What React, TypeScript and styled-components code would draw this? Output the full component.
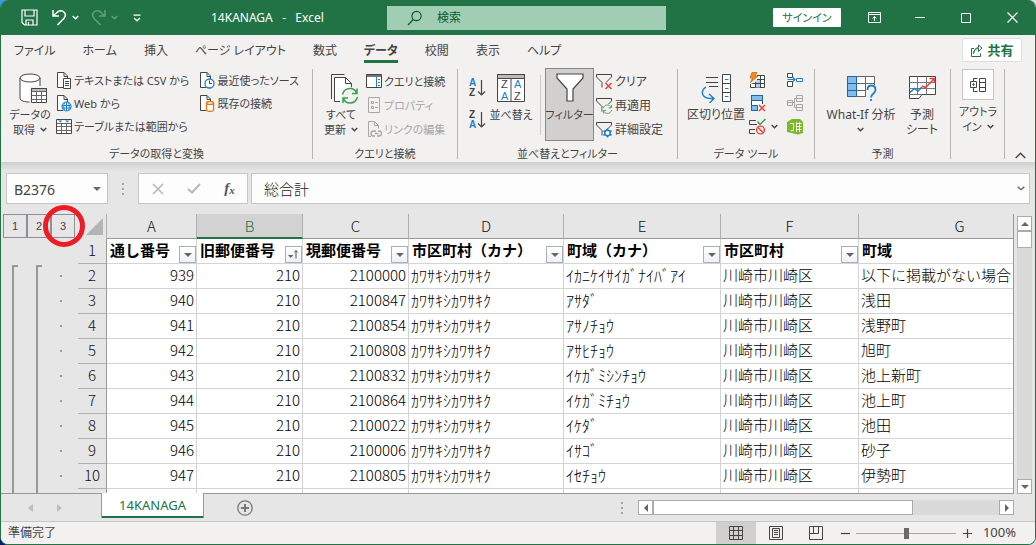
import React from "react";
import styled, { createGlobalStyle, css } from "styled-components";

const GREEN = "#217346";
const INK = "#444444";
const BLUE = "#1e7fc8";
const RED = "#e8423f";

const Global = createGlobalStyle`
  * { box-sizing: border-box; }
  html, body { margin: 0; height: 100%; }
  body {
    background: linear-gradient(90deg, #3c9be8 0, #3c9be8 50%, #dcdcdc 50%) top / 100% 50% no-repeat,
      linear-gradient(90deg, #0b1a6e 50%, #dcdcdc 50%);
    font-family: "Noto Sans", "Noto Sans CJK JP", sans-serif;
    font-size: 12px;
    line-height: 15px;
    color: ${INK};
    overflow: hidden;
  }
  button, input {
    font: inherit;
    color: inherit;
    margin: 0;
    padding: 0;
    border: 0;
    background: none;
    outline: none;
  }
  button { white-space: nowrap; font-feature-settings: "palt"; }
  svg { display: block; flex: none; }
`;

const Window = styled.div`
  height: 100vh;
  display: flex;
  flex-direction: column;
  background: #e6e6e6;
  border: 1px solid ${GREEN};
  border-top: 0;
  border-radius: 8px;
  overflow: hidden;
`;

/* ---------- title bar ---------- */

const TitleBar = styled.header`
  height: 35px;
  flex: none;
  display: flex;
  align-items: center;
  background: ${GREEN};
  color: #fff;
`;

const QuickAccess = styled.div`
  flex: 0 0 386px;
  display: flex;
  align-items: center;
  padding-left: 20px;
`;

const QuickButton = styled.button<{ $gap?: number; $dim?: boolean }>`
  display: flex;
  align-items: center;
  gap: 5px;
  margin-right: ${(p) => p.$gap ?? 12}px;
  opacity: ${(p) => (p.$dim ? 0.3 : 1)};
`;

const DocTitle = styled.h1`
  margin: 0;
  font-size: 12px;
  font-weight: 400;
  white-space: pre;
`;

const SearchBox = styled.label`
  flex: 0 1 279px;
  height: 24px;
  display: flex;
  align-items: center;
  gap: 14px;
  padding-left: 20px;
  background: #a0cdb4;
  color: #0e5c2f;
  input { width: 100%; }
  input::placeholder { color: #0e5c2f; opacity: 1; }
`;

const WindowControls = styled.div`
  flex: 1;
  display: flex;
  align-items: center;
  justify-content: flex-end;
`;

const SignIn = styled.button`
  width: 68px;
  height: 19px;
  margin-right: 10px;
  background: #fff;
  color: ${GREEN};
  border-radius: 1px;
  font-size: 11px;
`;

const CaptionButton = styled.button`
  width: 46px;
  height: 35px;
  display: grid;
  place-items: center;
`;

/* ---------- tabs ---------- */

const TabBar = styled.nav`
  height: 31px;
  flex: none;
  display: flex;
  align-items: flex-start;
  gap: 27px;
  padding: 3px 13px 0 13px;
  background: #f3f1f0;
`;

const Tab = styled.button<{ $active?: boolean }>`
  height: 25px;
  padding-top: 3px;
  font-size: 12px;
  line-height: 19px;
  border-bottom: 3px solid ${(p) => (p.$active ? GREEN : "transparent")};
  font-weight: ${(p) => (p.$active ? 700 : 400)};
`;

const ShareButton = styled.button`
  width: 60px;
  height: 24px;
  margin-left: auto;
  display: flex;
  align-items: center;
  justify-content: center;
  gap: 4px;
  background: #fff;
  border: 1px solid #e1dfdd;
  border-radius: 2px;
  color: ${GREEN};
  font-size: 13px;
  font-weight: 700;
`;

/* ---------- ribbon ---------- */

const Ribbon = styled.div`
  height: 96px;
  flex: none;
  display: flex;
  background: #f3f1f0;
`;

const Group = styled.section<{ $width: number }>`
  width: ${(p) => p.$width}px;
  margin: 3px 0;
  display: flex;
  flex-direction: column;
  border-right: 1px solid #b8b6b4;
`;

const GroupBody = styled.div<{ $pad?: number }>`
  flex: 1;
  display: flex;
  align-items: flex-start;
  padding-left: ${(p) => p.$pad ?? 0}px;
`;

const GroupLabel = styled.h2`
  margin: 0;
  height: 15px;
  font-size: 11px;
  font-weight: 400;
  line-height: 15px;
  text-align: center;
  white-space: nowrap;
  font-feature-settings: "palt";
  margin-bottom: -2px;
`;

const BigButton = styled.button<{ $width: number; $pressed?: boolean; $kana?: boolean }>`
  width: ${(p) => p.$width}px;
  height: 73px;
  margin-top: -1px;
  padding-top: 4px;
  display: flex;
  flex-direction: column;
  align-items: center;
  gap: 3px;
  font-size: ${(p) => (p.$kana ? 11 : 12)}px;
  ${(p) =>
    p.$pressed &&
    css`
      background: #d2d0ce;
      box-shadow: inset 0 0 0 1px #8a8886;
    `}
`;

const BigIcon = styled.span`
  height: 32px;
  display: grid;
  place-items: center;
`;

const BigText = styled.span`
  display: flex;
  align-items: center;
  justify-content: center;
  gap: 5px;
`;

const Stack = styled.div<{ $gap?: number; $left?: number; $top?: number; $kanji?: boolean }>`
  display: flex;
  flex-direction: column;
  align-items: flex-start;
  gap: ${(p) => p.$gap ?? 6}px;
  margin-left: ${(p) => p.$left ?? 0}px;
  padding-top: ${(p) => p.$top ?? 3}px;
  font-size: ${(p) => (p.$kanji ? 12 : 11)}px;
`;

const SmallButton = styled.button`
  height: 17px;
  display: flex;
  align-items: center;
  gap: 2px;
  &:disabled { color: #a8a6a4; }
`;

const InnerRule = styled.span`
  width: 1px;
  height: 60px;
  margin: 6px 4px 0 5px;
  background: #cccac8;
`;

const IconFrame = styled.span`
  width: 32px;
  height: 31px;
  display: grid;
  place-items: center;
  background: #fff;
  border: 1px solid #c8c6c4;
`;

const Collapse = styled.button`
  margin: auto 9px 3px auto;
`;

const Pad = styled.span`
  width: 1px;
`;

const ChevronLine = styled.span`
  height: 15px;
  display: grid;
  place-items: center;
`;

const OutlineButton = styled.button`
  width: 46px;
  display: flex;
  flex-direction: column;
  align-items: center;
  gap: 4px;
  font-size: 11px;
`;

/* ---------- formula bar ---------- */

const FormulaBar = styled.div`
  flex: none;
  display: flex;
  align-items: center;
  padding: 11px 5px 10px;
  background: linear-gradient(#cfcfcf, #e6e6e6 9px);
`;

const Field = styled.div<{ $grow?: boolean; $width?: number }>`
  height: 31px;
  min-width: 0;
  ${(p) => (p.$grow ? "flex: 1;" : `flex: 0 0 ${p.$width}px;`)}
  display: flex;
  align-items: center;
  background: #fdfdfd;
  border: 1px solid #c6c6c6;
  input { flex: 1; width: 0; min-width: 0; }
`;

const NameInput = styled.input`
  padding: 3px 0 0 7px;
  font-size: 14px;
  line-height: 20px;
`;

const FormulaInput = styled.input`
  padding-left: 12px;
  font-size: 15px;
  font-family: "Noto Sans CJK JP", sans-serif;
  font-weight: 300;
  line-height: 22px;
  color: #222;
`;

const FieldButton = styled.button<{ $width?: number }>`
  width: ${(p) => p.$width ?? 20}px;
  height: 100%;
  flex: none;
  display: grid;
  place-items: center;
`;

const FxButton = styled.button`
  width: 35px;
  font: italic 700 15px "Liberation Serif", serif;
  color: #555;
  sub { font-size: 11px; vertical-align: -1px; }
`;

const Grip = styled.span<{ $side: number }>`
  margin: 0 ${(p) => p.$side}px;
  display: grid;
  gap: 3px;
  i { width: 2px; height: 2px; background: #a6a6a6; }
`;

const FieldGap = styled.span`
  width: 3px;
`;

/* ---------- sheet ---------- */

const SheetArea = styled.main`
  flex: 1;
  min-height: 0;
  display: flex;
`;

const Outline = styled.div`
  flex: 0 0 77px;
  display: flex;
  flex-direction: column;
`;

const Levels = styled.div`
  height: 51px;
  flex: none;
  display: flex;
  padding-left: 2px;
`;

const LevelButton = styled.button`
  position: relative;
  width: 24px;
  height: 24px;
  border: 1px solid #8c8f96;
  font-family: "Liberation Sans", sans-serif;
  font-size: 11px;
  text-align: center;
`;

const RedRing = styled.span`
  position: absolute;
  z-index: 2;
  left: -9px;
  top: -10px;
  width: 42px;
  height: 42px;
  border: 5px solid #ee1c25;
  border-radius: 50%;
`;

const Brackets = styled.div`
  flex: 1;
  min-height: 0;
  overflow: hidden;
  display: flex;
  padding-left: 11px;
`;

const Bracket = styled.span`
  width: 6px;
  margin-right: 18px;
  border: solid #999;
  border-width: 2px 0 0 2px;
`;

const Dots = styled.div`
  display: flex;
  flex-direction: column;
  gap: 23px;
  padding-top: 10px;
  i { flex: none; width: 2px; height: 2px; background: #999; }
`;

const GridClip = styled.div`
  flex: 1;
  min-width: 0;
  overflow: hidden;
  border-right: 1px solid #999;
`;

/* The last column runs on past the visible edge of the sheet. */
const Grid = styled.table`
  width: calc(100% + 48px);
  table-layout: fixed;
  border-collapse: separate;
  border-spacing: 0;
  font-family: "Noto Sans CJK JP", sans-serif;
  color: #000;
`;

const cell = css`
  height: 25px;
  padding: 0;
  overflow: hidden;
  white-space: nowrap;
  line-height: 22px;
`;

const Corner = styled.td`
  ${cell}
  padding-left: 8px;
  border-right: 1px solid #b0b0b0;
`;

const ColHead = styled.th<{ $selected?: boolean }>`
  ${cell}
  font-size: 15px;
  font-weight: 300;
  color: ${(p) => (p.$selected ? GREEN : "#111")};
  background: ${(p) => (p.$selected ? "#d2d2d2" : "#e6e6e6")};
  border-right: 1px solid #b0b0b0;
  border-bottom: ${(p) => (p.$selected ? `2px solid ${GREEN}` : "1px solid #999")};
`;

const RowHead = styled.th`
  ${cell}
  padding-bottom: 2px;
  font-size: 15px;
  font-weight: 300;
  color: #111;
  background: #e6e6e6;
  border-right: 1px solid #999;
  border-bottom: 1px solid #b0b0b0;
`;

const Cell = styled.td<{ $kind?: "num" | "half" }>`
  ${cell}
  background: #fff;
  border-right: 1px solid #d4d4d4;
  border-bottom: 1px solid #d4d4d4;
  font-size: ${(p) => (p.$kind === "half" ? 16 : 15)}px;
  font-weight: 300;
  text-align: ${(p) => (p.$kind === "num" ? "right" : "left")};
  padding: 0 2px 2px;
`;

const HeadCell = styled(Cell)`
  padding: 0 0 0 3px;
  font-weight: 700;
`;

const Heading = styled.div`
  height: 24px;
  display: flex;
  align-items: flex-start;
  justify-content: space-between;
  font-size: 15px;
  font-weight: 700;
  line-height: 22px;
`;

const FilterButton = styled.button`
  width: 17px;
  height: 17px;
  flex: none;
  align-self: flex-end;
  display: grid;
  place-items: center;
  background: linear-gradient(#fff, #eef1f6);
  border: 1px solid #a9afb8;
`;

const VScroll = styled.div`
  flex: 0 0 21px;
  display: flex;
  flex-direction: column;
  align-items: center;
  padding-top: 2px;
  margin-bottom: -1px;
  z-index: 1;
`;

const ScrollButton = styled.button`
  width: 15px;
  height: 15px;
  flex: none;
  display: grid;
  place-items: center;
  background: #fff;
  border: 1px solid #ababab;
`;

const Track = styled.div<{ $row?: boolean }>`
  flex: 1;
  display: flex;
  flex-direction: ${(p) => (p.$row ? "row" : "column")};
  ${(p) => (p.$row ? "height" : "width")}: 15px;
  background: #dadada;
`;

const Thumb = styled.span<{ $row?: boolean }>`
  ${(p) => (p.$row ? "width: 75%; height: 15px;" : "width: 15px; height: 17px;")}
  background: #fff;
  border: 1px solid #ababab;
`;

/* ---------- sheet tabs ---------- */

const SheetBar = styled.div`
  height: 28px;
  flex: none;
  display: flex;
  align-items: flex-start;
`;

const SheetNav = styled.div`
  width: 100px;
  height: 28px;
  display: flex;
  align-items: center;
  gap: 24px;
  padding-left: 27px;
  border-top: 1px solid #999;
`;

const SheetTab = styled.button`
  width: 103px;
  height: 25px;
  background: #fff;
  color: ${GREEN};
  border: solid #999;
  border-width: 0 1px;
  box-shadow: inset 0 -2px 0 ${GREEN};
  font-size: 13px;
`;

const SheetRest = styled.div`
  flex: 1;
  height: 28px;
  display: flex;
  align-items: center;
  border-top: 1px solid #999;
  padding-left: 33px;
`;

const Fill = styled.span`
  flex: 1;
`;

const HScroll = styled.div`
  flex: 0 0 376px;
  display: flex;
  align-items: center;
`;

const BarEnd = styled.span`
  width: 21px;
`;

/* ---------- status bar ---------- */

const StatusBar = styled.footer`
  height: 23px;
  flex: none;
  display: flex;
  align-items: stretch;
  padding: 0 19px 0 7px;
  background: #f3f1f0;
  border-top: 1px solid #c6c6c6;
  line-height: 21px;
`;

const StatusText = styled.span`
  flex: 1;
`;

const ViewButton = styled.button<{ $active?: boolean }>`
  width: 40px;
  display: grid;
  place-items: center;
  background: ${(p) => (p.$active ? "#d2d0ce" : "none")};
`;

const ZoomButton = styled.button`
  width: 12px;
  display: grid;
  place-items: center;
`;

const ZoomSlider = styled.input`
  appearance: none;
  width: 100px;
  margin: 0 5px;
  &::-webkit-slider-runnable-track {
    height: 11px;
    background: linear-gradient(#a6a6a6, #a6a6a6) center / 100% 1px no-repeat;
  }
  &::-webkit-slider-thumb {
    appearance: none;
    width: 5px;
    height: 11px;
    background: #6b6967;
  }
`;

const ZoomValue = styled.span`
  width: 43px;
  font-size: 13px;
  text-align: right;
`;

/* ---------- icons ---------- */

type SvgProps = { w: number; h: number; children: React.ReactNode; stroke?: string; sw?: number };
const Svg = ({ w, h, children, stroke = INK, sw = 1 }: SvgProps) => (
  <svg width={w} height={h} viewBox={`0 0 ${w} ${h}`} fill="none" stroke={stroke} strokeWidth={sw} aria-hidden="true">
    {children}
  </svg>
);

const Chevron = ({ color = INK, w = 7 }: { color?: string; w?: number }) => (
  <Svg w={w} h={5} stroke={color} sw={1.4}>
    <path d={`M.7 .9 L${w / 2} 3.7 L${w - 0.7} .9`} />
  </Svg>
);

const Triangle = ({ dir }: { dir: "up" | "down" | "left" | "right" }) => {
  const d = { up: "M0 6L4 2L8 6z", down: "M0 2h8L4 6z", left: "M6 0v8L2 4z", right: "M2 0v8L6 4z" }[dir];
  return (
    <Svg w={8} h={8} stroke="none">
      <path d={d} fill="#666" />
    </Svg>
  );
};

const SaveIcon = () => (
  <Svg w={17} h={17} stroke="#fff" sw={1.2}>
    <path d="M1 1h15v15H3.500L1 13.500z M4 1v6h9V1 M5 16v-5h7v5 M7.500 16v-3" />
  </Svg>
);

const UndoIcon = () => (
  <Svg w={15} h={17} stroke="#fff" sw={1.5}>
    <path d="M1 1v6h6 M1.300 6.700L5.500 3C11-.5 15.500 5 12 9.200L5.500 16" />
  </Svg>
);

const RedoIcon = () => (
  <Svg w={15} h={17} stroke="#fff" sw={1.5}>
    <path d="M14 1v6H8 M13.700 6.700L9.500 3C4-.5-.5 5 3 9.200L9.500 16" />
  </Svg>
);

const CustomizeIcon = () => (
  <Svg w={8} h={8} stroke="#fff" sw={1.3}>
    <path d="M.5 1.200h7 M1 4l3 2.800L7 4" />
  </Svg>
);

const SearchIcon = () => (
  <Svg w={16} h={16} stroke="#0e5c2f" sw={1.2}>
    <circle cx="9.500" cy="6" r="4.600" />
    <path d="M6.200 9.500L1 15" />
  </Svg>
);

const ShareIcon = () => (
  <Svg w={13} h={13} stroke={GREEN}>
    <path d="M4 4.500H1.500v8h9V9.500 M3.500 9.500C4 6 6 4.500 8.500 4.500V7.500L12 4L8.500 1V3.500 C5.500 4 4 6 3.500 9.500z" />
  </Svg>
);

const Page = () => (
  <>
    <path d="M7 15.500H1.500V.5h6.500l3.500 3.500v3" fill="#fff" />
    <path d="M8 .5v4h3.500" />
  </>
);

const DatabaseIcon = () => (
  <svg width="34" height="31" viewBox="-6 0 34 31" fill="none" stroke={INK} aria-hidden="true">
    <path d="M1 5v20c0 3 5 4 10 4s10-1 10-4V5" fill="#fff" />
    <ellipse cx="11" cy="5" rx="10" ry="4" fill="#fff" />
    <path d="M10.500 13h18v18h-18z" fill="#f3f1f0" stroke="none" />
    <path d="M12.500 15.500h15v14h-15z" fill="#fff" />
    <path d="M12.500 15.500h15v3h-15z" fill="#bbb" />
    <path d="M12.500 18.500h15M12.500 22.500h15M12.500 26.500h15M17.500 18.500v11M22.500 18.500v11" stroke="#666" />
  </svg>
);

const TextFileIcon = () => (
  <Svg w={16} h={17}>
    <Page />
    <path d="M7.500 6.500h7v10h-7z" fill="#fff" />
    <path d="M9 9.500h4M9 11.500h4M9 13.500h4" />
  </Svg>
);

const WebFileIcon = () => (
  <Svg w={16} h={17}>
    <Page />
    <circle cx="10.500" cy="11.500" r="4.500" fill="#fff" stroke={BLUE} strokeWidth="1.200" />
    <path d="M6 10.500h9M6 13h9M10.500 7v9M8.500 8c-1 2-1 5 0 7M12.500 8c1 2 1 5 0 7" stroke={BLUE} />
  </Svg>
);

const TableFileIcon = () => (
  <Svg w={16} h={17}>
    <path d="M.5 1.500h15v14H.5z" fill="#fff" />
    <path d="M1 5.500h14M1 8.500h14M1 12.500h14M5.500 5.500v10M10.500 5.500v10" stroke="#666" />
    <path d="M2 2.500h4.500L4.200 4.500zM9 2.500h4.500l-2.300 2z" fill={BLUE} stroke="none" />
  </Svg>
);

const RecentFileIcon = () => (
  <Svg w={16} h={17}>
    <Page />
    <circle cx="10.500" cy="11.500" r="4.500" fill="#fff" stroke={BLUE} strokeWidth="1.300" />
    <path d="M10.500 8.500v3h2.500" />
  </Svg>
);

const ConnectionFileIcon = () => (
  <Svg w={16} h={17}>
    <Page />
    <path d="M7.500 8v7c0 1.800 7 1.800 7 0V8" fill="#fff" stroke="#e07a1c" strokeWidth="1.400" />
    <ellipse cx="11" cy="8" rx="3.500" ry="1.500" fill="#fff" stroke="#e07a1c" strokeWidth="1.400" />
  </Svg>
);

const RefreshArrows = () => (
  <g stroke="#3ba04c" strokeWidth="1.500">
    <path d="M0 6C1 2 4 0 7.500 0C10.500 0 13 1.500 14 4.500M14.500 0v5h-5M15 8.500C14 12.500 11 14.500 7.500 14.500C4.500 14.500 2 13 1 10M.5 14.500v-5h5" />
  </g>
);

const RefreshIcon = () => (
  <svg width="35" height="31" viewBox="-6 0 35 31" fill="none" stroke={INK} aria-hidden="true">
    <path d="M1.500 26V1.500h13" />
    <path d="M4.500 4.500h11l6 6v17h-17z" fill="#fff" stroke="none" />
    <path d="M10 28.500H4.500v-24h11l6 6v4 M15.500 4.500v6h6" />
    <circle cx="20" cy="23" r="9" fill="#f3f1f0" stroke="none" />
    <g transform="translate(12.500 15.500)">
      <RefreshArrows />
    </g>
  </svg>
);

const QueryPaneIcon = () => (
  <Svg w={16} h={17}>
    <path d="M.5 1.500h15v13H.5z" fill="#fff" />
    <path d="M1 3h14" strokeWidth="2" stroke="#777" />
    <path d="M10.500 4v10" stroke={BLUE} />
    <path d="M12 6.500h2M12 9.500h2M12 12.500h2" stroke={BLUE} />
  </Svg>
);

const PropertiesIcon = () => (
  <Svg w={16} h={17} stroke="#a8a6a4">
    <path d="M2.500 .5h11v15h-11z M5.500 4.500h2v2h-2z M9 5.500h3 M5.500 9.500h2v2h-2z M9 10.500h3" />
  </Svg>
);

const EditLinksIcon = () => (
  <Svg w={16} h={17} stroke="#a8a6a4">
    <path d="M5 15.500H2.500v-15h6l4 4V7.500 M8.500 .5v4h4" />
    <path d="M9 15H7.500a2.500 2.500 0 010-5H10M9 12.500h3.500M12 10h1a2.500 2.500 0 010 5h-2" strokeWidth="1.300" />
  </Svg>
);

const SortGlyph = ({ top, bottom, topBlue }: { top: string; bottom: string; topBlue: boolean }) => (
  <svg width="18" height="21" viewBox="0 0 18 21" fill="none" aria-hidden="true">
    <text x="0" y="9" fontSize="10" fontWeight="700" fontFamily="Liberation Sans, sans-serif" fill={topBlue ? BLUE : INK}>{top}</text>
    <text x="0" y="19" fontSize="10" fontWeight="700" fontFamily="Liberation Sans, sans-serif" fill={topBlue ? INK : BLUE}>{bottom}</text>
    <path d="M12.500 3v15M9 14.500l3.500 3.500l3.500-3.500" stroke={INK} strokeWidth="1.200" />
  </svg>
);

const SortIcon = () => (
  <svg width="28" height="28" viewBox="0 0 28 28" fill="none" stroke={INK} aria-hidden="true">
    <path d="M.5 .5h27v27H.5z" fill="#fff" />
    <path d="M.5 .5h27v4H.5z" fill="#bbb" />
    <path d="M14 4.500v23" />
    <g stroke="none" fontSize="11" fontFamily="Liberation Sans, sans-serif">
      <text x="4" y="14" fill={INK}>Z</text>
      <text x="4" y="26" fill={BLUE}>A</text>
      <text x="17" y="14" fill={BLUE}>A</text>
      <text x="17" y="26" fill={INK}>Z</text>
    </g>
  </svg>
);

const FilterIcon = () => (
  <Svg w={28} h={30} sw={1.2}>
    <path d="M1 1h26v4L17 16v12h-6V16L1 5z" fill="#fff" />
  </Svg>
);

const SmallFunnel = () => <path d="M15.500 4V1.500H.5V4L6 9.500V14.500M15.500 4L10 9.500" />;

const ClearIcon = () => (
  <Svg w={17} h={17}>
    <SmallFunnel />
    <path d="M9.500 10l6 6M15.500 10l-6 6" stroke={RED} strokeWidth="1.500" />
  </Svg>
);

const ReapplyIcon = () => (
  <Svg w={17} h={17}>
    <SmallFunnel />
    <circle cx="11.500" cy="12" r="5" fill="#f3f1f0" stroke="none" />
    <g transform="translate(7 8) scale(.58)">
      <RefreshArrows />
    </g>
  </Svg>
);

const AdvancedIcon = () => (
  <Svg w={17} h={17}>
    <SmallFunnel />
    <circle cx="11.500" cy="12" r="2.700" stroke={BLUE} strokeWidth="1.500" fill="#fff" />
    <path d="M11.500 7.500v2M11.500 14.500v2M7.500 9.700l1.800 1M13.700 13.300l1.800 1M7.500 14.300l1.800-1M13.700 10.700l1.800-1" stroke={BLUE} strokeWidth="1.600" />
  </Svg>
);

const SplitIcon = () => (
  <Svg w={31} h={30}>
    <path d="M5 4.500h12M5 9.500h12M8 13.500h9" />
    <path d="M21.500 1.500h8v27h-8zM21.500 10.500h8M21.500 19.500h8" fill="#fff" />
    <path d="M24 6.500h3.500M24 15.500h3.500M24 23.500h3.500" stroke={BLUE} />
    <path d="M5 14C-1 18 0 26 12 25.500M8 21l5 4.500L8.500 30" stroke={BLUE} strokeWidth="1.400" />
  </Svg>
);

const FlashFillIcon = () => (
  <Svg w={17} h={17}>
    <path d="M1.500 3.500h14v12h-14z" fill="#fff" />
    <path d="M6 8h5v7.500H6z" fill="#a9d0f0" stroke="none" />
    <path d="M1.500 7.500h14M1.500 11.500h14M6.500 3.500v12M11.500 3.500v12" />
    <path d="M0 0h8v9l-6 3H0z" fill="#f3f1f0" stroke="none" />
    <path d="M3 .5h5L6 4h3L1.500 10.500L3.500 6H1z" fill="#f08a24" stroke="#c96a10" strokeWidth=".8" />
  </Svg>
);

const DuplicatesIcon = () => (
  <Svg w={17} h={17}>
    <path d="M2.500 .5h11v15h-11z" fill="#fff" />
    <path d="M2.500 .5h11v5h-11zM2.500 10.500h6v5h-6z" fill="#83bdec" stroke="#1d65a6" />
    <path d="M9 9h9v8h-9z" fill="#f3f1f0" stroke="none" />
    <path d="M10 10l6 6M16 10l-6 6" stroke={RED} strokeWidth="1.500" />
  </Svg>
);

const ValidationIcon = () => (
  <Svg w={17} h={17}>
    <path d="M7 2.500H.5v4H8M6 11.500H.5v4H6" />
    <path d="M8.500 3.500l2.500 3L16.500 1" stroke="#3ba04c" strokeWidth="1.500" />
    <circle cx="11.500" cy="12" r="3.900" stroke={RED} strokeWidth="1.400" />
    <path d="M9 9.500l5 5" stroke={RED} strokeWidth="1.400" />
  </Svg>
);

const ConsolidateIcon = () => (
  <Svg w={17} h={17}>
    <path d="M1.500 1.500h5v4h-5zM1.500 9.500h5v5h-5z" fill="#fff" />
    <path d="M10.500 6.500h6v3h-6z" fill="#fff" stroke={BLUE} />
    <path d="M1.500 7.500h7.500M6.500 5L9 7.500l-2.500 2.500" stroke={BLUE} strokeWidth="1.200" />
  </Svg>
);

const RelationsIcon = () => (
  <Svg w={17} h={17} stroke="#a8a6a4">
    <path d="M1.500 5.500h5v5h-5zM10.500 .5h6v6h-6zM10.500 9.500h6v6h-6z M1.500 7.500h5M10.500 3.500h6M10.500 12.500h6M6.500 7.500h2V3.500h2M8.500 8v4.500h2" />
  </Svg>
);

const DataModelIcon = () => (
  <Svg w={18} h={17} stroke="#fff">
    <path d="M1 4L6 1h8l3 3v11l-5 1.500L1 14z" fill="#7ab928" stroke="none" />
    <path d="M4 5.500h3.500V12c0 1-3 1-3 0M10 5.500h5.500M10 8.500h5.500M10 11.500h5.500M10.500 4v10M13.500 4v10" />
  </Svg>
);

const WhatIfIcon = () => (
  <Svg w={31} h={28}>
    <path d="M1.500 2.500h27v20h-27z" fill="#fff" stroke="#666" />
    <path d="M1.500 2.500h9v20h-9z" fill="#83bdec" stroke="#1d65a6" />
    <path d="M1.500 9.500h9M1.500 16.500h9" stroke="#1d65a6" />
    <path d="M10.500 9.500h18M10.500 16.500h18M19.500 2.500v20" stroke="#666" />
    <path d="M20 11h11v17H20z" fill="#f3f1f0" stroke="none" />
    <path d="M21.500 16c0-6 8-6 8 0c0 4-4.500 3.500-4.500 7.500M25 25v2" stroke={BLUE} strokeWidth="1.800" />
  </Svg>
);

const ForecastIcon = () => (
  <Svg w={29} h={28}>
    <path d="M1.500 2.500h26v18H14l-3 4H1.500z" fill="#fff" />
    <path d="M1.500 8.500h26M1.500 14.500h26M9.500 2.500v18M18.500 2.500v18M1.500 20.500H14" stroke="#777" />
    <path d="M2 18.500l4.500-4 3.500 2.500 4-4" stroke={BLUE} strokeWidth="1.500" />
    <path d="M14 12l3.500 1.500L26 5M21.500 4.500H26.500V9" stroke={RED} strokeWidth="1.500" />
  </Svg>
);

const OutlineIcon = () => (
  <Svg w={16} h={14}>
    <path d="M.5 3.500h6v6h-6z" fill="#fff" />
    <path d="M3.500 5v3M2 6.500h3" stroke={BLUE} />
    <path d="M9.500 .5h6v13h-6zM9.500 4.500h6M9.500 9.500h6M3.500 3V.5h4M3.500 10v3.500h4" />
  </Svg>
);

const SortedIcon = () => (
  <Svg w={11} h={11} stroke="#555">
    <path d="M0 6h5.500L2.700 9z" fill="#666" stroke="none" />
    <path d="M8 9.500V1.500M6.300 3.500L8 1.500l1.700 2" />
  </Svg>
);

/* ---------- data ---------- */

const TABS = ["ファイル", "ホーム", "挿入", "ページ レイアウト", "数式", "データ", "校閲", "表示", "ヘルプ"];

const HEADINGS = ["通し番号", "旧郵便番号", "現郵便番号", "市区町村（カナ）", "町域（カナ）", "市区町村", "町域"];

const ROWS: [string, string, string][] = [
  ["2100000", "ｲｶﾆｹｲｻｲｶﾞﾅｲﾊﾞｱｲ", "以下に掲載がない場合"],
  ["2100847", "ｱｻﾀﾞ", "浅田"],
  ["2100854", "ｱｻﾉﾁｮｳ", "浅野町"],
  ["2100808", "ｱｻﾋﾁｮｳ", "旭町"],
  ["2100832", "ｲｹｶﾞﾐｼﾝﾁｮｳ", "池上新町"],
  ["2100864", "ｲｹｶﾞﾐﾁｮｳ", "池上町"],
  ["2100022", "ｲｹﾀﾞ", "池田"],
  ["2100006", "ｲｻｺﾞ", "砂子"],
  ["2100805", "ｲｾﾁｮｳ", "伊勢町"],
];

const COLUMN_WIDTHS = [29, 90, 106, 106, 155, 157, 138];

/* ---------- sections ---------- */

const Title = () => (
  <TitleBar>
    <QuickAccess>
      <QuickButton aria-label="保存" $gap={14}><SaveIcon /></QuickButton>
      <QuickButton aria-label="元に戻す"><UndoIcon /><Chevron color="#fff" /></QuickButton>
      <QuickButton aria-label="やり直し" $gap={15} $dim><RedoIcon /><Chevron color="#fff" /></QuickButton>
      <QuickButton aria-label="カスタマイズ" $gap={70}><CustomizeIcon /></QuickButton>
      <DocTitle>{"14KANAGA   -   Excel"}</DocTitle>
    </QuickAccess>
    <SearchBox>
      <SearchIcon />
      <input placeholder="検索" aria-label="検索" />
    </SearchBox>
    <WindowControls>
      <SignIn>サインイン</SignIn>
      <CaptionButton aria-label="リボンの表示オプション">
        <Svg w={13} h={11} stroke="#fff">
          <path d="M.5 .5h12v10H.5zM.5 2.500h12M6.500 9V4.500M4.500 6.500l2-2 2 2" />
        </Svg>
      </CaptionButton>
      <CaptionButton aria-label="最小化">
        <Svg w={10} h={10} stroke="#fff"><path d="M0 4.500h10" /></Svg>
      </CaptionButton>
      <CaptionButton aria-label="最大化">
        <Svg w={10} h={10} stroke="#fff"><path d="M.5 .5h9v9h-9z" /></Svg>
      </CaptionButton>
      <CaptionButton aria-label="閉じる">
        <Svg w={11} h={11} stroke="#fff" sw={1.2}><path d="M.5 .5l10 10M10.500 .5l-10 10" /></Svg>
      </CaptionButton>
    </WindowControls>
  </TitleBar>
);

const Tabs = () => (
  <TabBar>
    {TABS.map((t) => (
      <Tab key={t} $active={t === "データ"}>{t}</Tab>
    ))}
    <ShareButton><ShareIcon />共有</ShareButton>
  </TabBar>
);

const RibbonBar = () => (
  <Ribbon>
    <Group $width={312}>
      <GroupBody $pad={5}>
        <BigButton $width={48} $kana>
          <BigIcon><DatabaseIcon /></BigIcon>
          <span>
            <BigText>データの</BigText>
            <BigText>取得<Chevron /></BigText>
          </span>
        </BigButton>
        <Stack $left={2}>
          <SmallButton><TextFileIcon />テキストまたは CSV から</SmallButton>
          <SmallButton><WebFileIcon />Web から</SmallButton>
          <SmallButton><TableFileIcon />テーブルまたは範囲から</SmallButton>
        </Stack>
        <Stack $left={10}>
          <SmallButton><RecentFileIcon />最近使ったソース</SmallButton>
          <SmallButton><ConnectionFileIcon />既存の接続</SmallButton>
        </Stack>
      </GroupBody>
      <GroupLabel>データの取得と変換</GroupLabel>
    </Group>

    <Group $width={145}>
      <GroupBody $pad={6}>
        <BigButton $width={44} $kana>
          <BigIcon><RefreshIcon /></BigIcon>
          <span>
            <BigText>すべて</BigText>
            <BigText>更新<Chevron /></BigText>
          </span>
        </BigButton>
        <Stack $left={3} $gap={7} $top={4}>
          <SmallButton><QueryPaneIcon />クエリと接続</SmallButton>
          <SmallButton disabled><PropertiesIcon />プロパティ</SmallButton>
          <SmallButton disabled><EditLinksIcon />リンクの編集</SmallButton>
        </Stack>
      </GroupBody>
      <GroupLabel>クエリと接続</GroupLabel>
    </Group>

    <Group $width={220}>
      <GroupBody $pad={11}>
        <Stack $gap={11} $top={8}>
          <button aria-label="昇順"><SortGlyph top="A" bottom="Z" topBlue /></button>
          <button aria-label="降順"><SortGlyph top="Z" bottom="A" topBlue={false} /></button>
        </Stack>
        <BigButton $width={48} $kana>
          <BigIcon><SortIcon /></BigIcon>
          <BigText>並べ替え</BigText>
        </BigButton>
        <InnerRule />
        <BigButton $width={49} $pressed $kana>
          <BigIcon><FilterIcon /></BigIcon>
          <BigText>フィルター</BigText>
        </BigButton>
        <Stack $left={2} $gap={7} $top={4} $kanji>
          <SmallButton><ClearIcon />クリア</SmallButton>
          <SmallButton><ReapplyIcon />再適用</SmallButton>
          <SmallButton><AdvancedIcon />詳細設定</SmallButton>
        </Stack>
      </GroupBody>
      <GroupLabel>並べ替えとフィルター</GroupLabel>
    </Group>

    <Group $width={137}>
      <GroupBody $pad={8}>
        <BigButton $width={60}>
          <BigIcon><SplitIcon /></BigIcon>
          <BigText>区切り位置</BigText>
        </BigButton>
        <Stack $left={3}>
          <SmallButton aria-label="フラッシュ フィル"><FlashFillIcon /></SmallButton>
          <SmallButton aria-label="重複の削除"><DuplicatesIcon /></SmallButton>
          <SmallButton aria-label="データの入力規則"><ValidationIcon /><Pad /><Chevron /></SmallButton>
        </Stack>
        <Stack $left={8}>
          <SmallButton aria-label="統合"><ConsolidateIcon /></SmallButton>
          <SmallButton aria-label="リレーションシップ"><RelationsIcon /></SmallButton>
          <SmallButton aria-label="データ モデルの管理"><DataModelIcon /></SmallButton>
        </Stack>
      </GroupBody>
      <GroupLabel>データ ツール</GroupLabel>
    </Group>

    <Group $width={136}>
      <GroupBody $pad={6}>
        <BigButton $width={80}>
          <BigIcon><WhatIfIcon /></BigIcon>
          <span>
            <BigText>What-If 分析</BigText>
            <BigText><ChevronLine><Chevron /></ChevronLine></BigText>
          </span>
        </BigButton>
        <BigButton $width={42}>
          <BigIcon><ForecastIcon /></BigIcon>
          <span>
            <BigText>予測</BigText>
            <BigText>シート</BigText>
          </span>
        </BigButton>
      </GroupBody>
      <GroupLabel>予測</GroupLabel>
    </Group>

    <Group $width={54}>
      <GroupBody $pad={4}>
        <OutlineButton>
          <IconFrame><OutlineIcon /></IconFrame>
          <span>
            <BigText>アウトラ</BigText>
            <BigText>イン<Chevron /></BigText>
          </span>
        </OutlineButton>
      </GroupBody>
    </Group>

    <Collapse aria-label="リボンを折りたたむ">
      <Svg w={11} h={7} sw={1.4}><path d="M.7 6L5.500 1.200L10.300 6" /></Svg>
    </Collapse>
  </Ribbon>
);

const Formula = () => (
  <FormulaBar>
    <Field $width={102}>
      <NameInput aria-label="名前ボックス" defaultValue="B2376" />
      <FieldButton aria-label="名前の一覧"><Triangle dir="down" /></FieldButton>
    </Field>
    <Grip $side={14}><i /><i /><i /></Grip>
    <Field $width={110}>
      <FieldButton $width={37} aria-label="キャンセル">
        <Svg w={12} h={12} stroke="#b8b8b8" sw={1.6}><path d="M1 1l10 10M11 1L1 11" /></Svg>
      </FieldButton>
      <FieldButton $width={36} aria-label="入力">
        <Svg w={14} h={11} stroke="#b8b8b8" sw={2}><path d="M1 6l4 3.500L13 1" /></Svg>
      </FieldButton>
      <FxButton aria-label="関数の挿入">f<sub>x</sub></FxButton>
    </Field>
    <FieldGap />
    <Field $grow>
      <FormulaInput aria-label="数式バー" defaultValue="総合計" />
      <FieldButton aria-label="数式バーの展開" $width={17}><Chevron w={8} color="#666" /></FieldButton>
    </Field>
  </FormulaBar>
);

const Sheet = () => (
  <SheetArea>
    <Outline>
      <Levels>
        <LevelButton>1</LevelButton>
        <LevelButton>2</LevelButton>
        <LevelButton>3<RedRing /></LevelButton>
      </Levels>
      <Brackets>
        <Bracket />
        <Bracket />
        <Dots>{ROWS.map((r) => <i key={r[0]} />)}</Dots>
      </Brackets>
    </Outline>
    <GridClip>
      <Grid>
        <colgroup>
          {COLUMN_WIDTHS.map((w, i) => <col key={i} width={w} />)}
          <col />
        </colgroup>
        <thead>
          <tr>
            <Corner>
              <Svg w={18} h={18} stroke="none"><path d="M17 0v17H0z" fill="#b4b4b4" /></Svg>
            </Corner>
            {["A", "B", "C", "D", "E", "F", "G"].map((c) => (
              <ColHead key={c} scope="col" $selected={c === "B"}>{c}</ColHead>
            ))}
          </tr>
        </thead>
        <tbody>
          <tr>
            <RowHead scope="row">1</RowHead>
            {HEADINGS.map((h, i) => (
              <HeadCell key={h}>
                <Heading>
                  {h}
                  {i < 6 && (
                    <FilterButton aria-label={`${h} フィルター`}>
                      {i === 1 ? <SortedIcon /> : <Triangle dir="down" />}
                    </FilterButton>
                  )}
                </Heading>
              </HeadCell>
            ))}
          </tr>
          {ROWS.map(([code, kana, town], i) => (
            <tr key={code}>
              <RowHead scope="row">{i + 2}</RowHead>
              <Cell $kind="num">{939 + i}</Cell>
              <Cell $kind="num">210</Cell>
              <Cell $kind="num">{code}</Cell>
              <Cell $kind="half">ｶﾜｻｷｼｶﾜｻｷｸ</Cell>
              <Cell $kind="half">{kana}</Cell>
              <Cell>川崎市川崎区</Cell>
              <Cell>{town}</Cell>
            </tr>
          ))}
          <tr>
            <RowHead />
            {HEADINGS.map((h) => <Cell key={h} />)}
          </tr>
        </tbody>
      </Grid>
    </GridClip>
    <VScroll>
      <ScrollButton aria-label="上へ"><Triangle dir="up" /></ScrollButton>
      <Track><Thumb /></Track>
      <ScrollButton aria-label="下へ"><Triangle dir="down" /></ScrollButton>
    </VScroll>
  </SheetArea>
);

const NavArrow = ({ d }: { d: string }) => (
  <Svg w={5} h={8} stroke="none"><path d={d} fill="#bdbdbd" /></Svg>
);

const SheetTabs = () => (
  <SheetBar>
    <SheetNav>
      <button aria-label="前のシート"><NavArrow d="M5 0v8L0 4z" /></button>
      <button aria-label="次のシート"><NavArrow d="M0 0v8l5-4z" /></button>
    </SheetNav>
    <SheetTab>14KANAGA</SheetTab>
    <SheetRest>
      <button aria-label="新しいシート">
        <Svg w={16} h={16} stroke="#777" sw={1.3}>
          <circle cx="8" cy="8" r="7.200" />
          <path d="M8 4v8M4 8h8" strokeWidth="2" />
        </Svg>
      </button>
      <Fill />
      <Grip $side={15}><i /><i /><i /></Grip>
      <HScroll>
        <ScrollButton aria-label="左へ"><Triangle dir="left" /></ScrollButton>
        <Track $row><Thumb $row /></Track>
        <ScrollButton aria-label="右へ"><Triangle dir="right" /></ScrollButton>
      </HScroll>
    </SheetRest>
    <BarEnd />
  </SheetBar>
);

const Status = () => (
  <StatusBar>
    <StatusText>準備完了</StatusText>
    <ViewButton $active aria-label="標準">
      <Svg w={14} h={14}><path d="M.5 .5h13v13H.5zM4.500 .5v13M9.500 .5v13M.5 4.500h13M.5 9.500h13" /></Svg>
    </ViewButton>
    <ViewButton aria-label="ページ レイアウト">
      <Svg w={14} h={14}><path d="M.5 .5h13v13H.5zM3.500 2.500h7v9h-7zM5 4.500h4M5 6.500h4M5 8.500h4" /></Svg>
    </ViewButton>
    <ViewButton aria-label="改ページ プレビュー">
      <Svg w={14} h={14}><path d="M.5 .5h13v13H.5zM.5 7.500h9V.5M4.500 .5V7.500" /></Svg>
    </ViewButton>
    <FieldGap />
    <ZoomButton aria-label="縮小"><Svg w={9} h={9}><path d="M0 4.500h9" strokeWidth="1.200" /></Svg></ZoomButton>
    <ZoomSlider type="range" min={0} max={100} defaultValue={50} aria-label="ズーム" />
    <ZoomButton aria-label="拡大"><Svg w={9} h={9}><path d="M0 4.500h9M4.500 0v9" strokeWidth="1.200" /></Svg></ZoomButton>
    <ZoomValue>100%</ZoomValue>
  </StatusBar>
);

export default function App() {
  return (
    <>
      <Global />
      <Window lang="ja">
        <Title />
        <Tabs />
        <RibbonBar />
        <Formula />
        <Sheet />
        <SheetTabs />
        <Status />
      </Window>
    </>
  );
}
